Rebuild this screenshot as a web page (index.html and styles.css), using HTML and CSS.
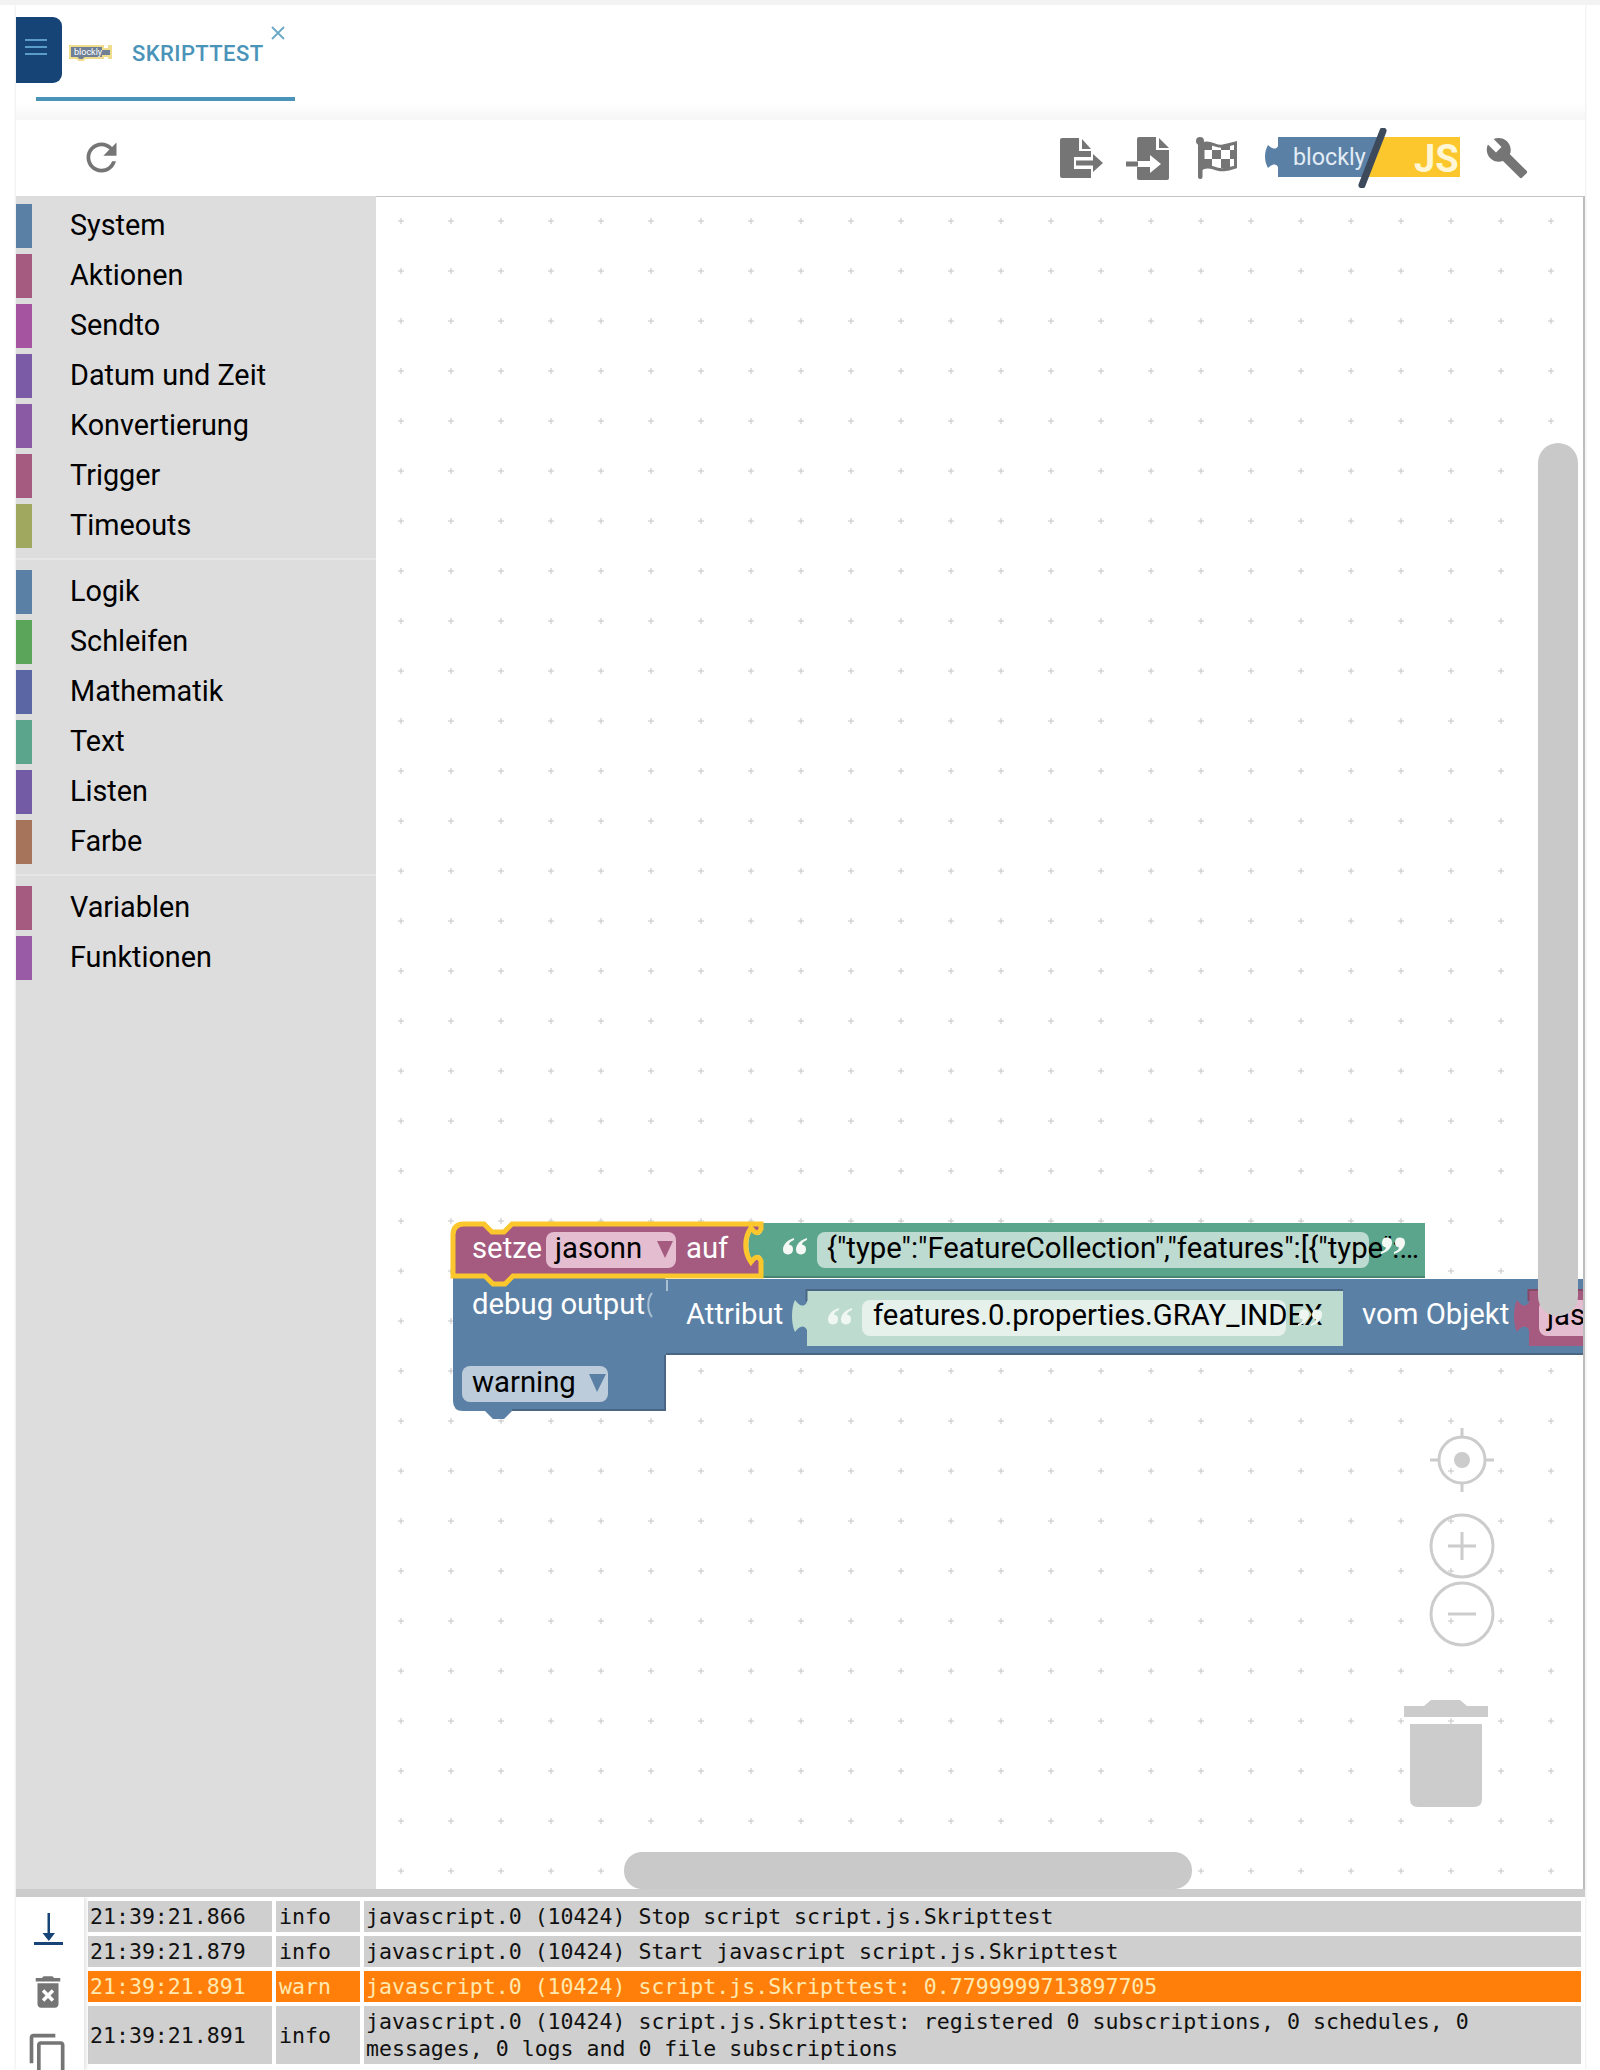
FILE: index.html
```html
<!DOCTYPE html>
<html lang="de">
<head>
<meta charset="utf-8">
<title>Skripttest</title>
<link rel="stylesheet" href="styles.css">
</head>
<body>
<div class="app">
  <header class="tabbar">
    <button class="menu-btn" aria-label="Menu"><span></span><span></span><span></span></button>
    <div class="tab">
      <svg class="tab-logo" viewBox="0 0 46 17" width="46" height="17">
        <path class="tl-out" d="M3 2H36V5H42V2H44V14H42V12H36V14H18L16 16H12L10 14H3Z"/>
        <text class="tl-text" x="7" y="11">blockly</text>
      </svg>
      <span class="tab-title">SKRIPTTEST</span>
      <svg class="tab-close" viewBox="0 0 14 14" width="14" height="14"><path d="M1 1L13 13M13 1L1 13"/></svg>
    </div>
  </header>

  <div class="toolbar">
    <svg class="ticon refresh" viewBox="0 0 24 24" width="45" height="45"><path d="M17.65 6.35C16.2 4.9 14.21 4 12 4c-4.42 0-7.99 3.58-7.99 8s3.57 8 7.99 8c3.73 0 6.84-2.55 7.73-6h-2.08c-.82 2.33-3.04 4-5.65 4-3.31 0-6-2.69-6-6s2.69-6 6-6c1.66 0 3.14.69 4.22 1.78L13 11h7V4l-2.35 2.35z"/></svg>
    <div class="tools">
      <svg class="ticon" viewBox="0 0 43 40" width="43" height="40">
        <path d="M0 2a2 2 0 0 1 2-2h17v13h12v6H14v12h17v9H2a2 2 0 0 1-2-2z"/>
        <path d="M22 1l9 10h-9z"/>
        <path d="M16 22.500h17V16l10 9-10 9v-6.500H16z"/>
      </svg>
      <svg class="ticon t-import" viewBox="0 0 43 43" width="43" height="43">
        <path d="M11 2a2 2 0 0 1 2-2h17v13h13v28a2 2 0 0 1-2 2H13a2 2 0 0 1-2-2V30h13v6l11-9-11-9v6H11z"/>
        <path d="M33 1l10 10H33z"/>
        <path d="M0 24.500h12v5H0z"/>
      </svg>
      <svg class="ticon t-flag" viewBox="0 0 41 42" width="41" height="42">
        <defs><pattern id="chk" patternUnits="userSpaceOnUse" width="18" height="18" x="7" y="4"><rect class="chk-a" width="9" height="9"/><rect class="chk-a" x="9" y="9" width="9" height="9"/></pattern></defs>
        <circle cx="4" cy="4" r="4"/>
        <rect x="2" y="4" width="4.500" height="38" rx="2"/>
        <path class="flag" d="M7 7C14 3 20 11 27 9C32 8 36 7 39.500 6V30C33 32 28 34 21 32C16 30 11 29 7 31Z"/>
      </svg>
      <svg class="logo t-logo" viewBox="0 0 196 60" width="196" height="60">
        <path class="logo-blue" d="M14 9H118L98 49H14V39C12 35 8 36 4 40C0 33 0 24 4 17C8 21 12 22 14 18Z"/>
        <path class="logo-yellow" d="M118 9H196V49H98Z"/>
        <text class="logo-b" x="29" y="37">blockly</text>
        <text class="logo-js" x="150" y="44">JS</text>
        <path class="logo-slash" d="M119 3L98 57"/>
      </svg>
      <svg class="ticon t-wrench" viewBox="0 0 24 24" width="44" height="44"><path d="M22.7 19l-9.100-9.100c.9-2.300.4-5-1.500-6.900-2-2-5-2.400-7.400-1.300L9 6 6 9 1.600 4.700C.4 7.100.9 10.100 2.900 12.100c1.900 1.900 4.600 2.400 6.900 1.500l9.100 9.100c.4.4 1 .4 1.400 0l2.300-2.300c.5-.4.5-1.100.1-1.400z"/></svg>
    </div>
  </div>

  <main class="main">
    <nav class="sidebar">
      <div class="cat"><i class="sw c-blue"></i>System</div>
      <div class="cat"><i class="sw c-rose"></i>Aktionen</div>
      <div class="cat"><i class="sw c-magenta"></i>Sendto</div>
      <div class="cat"><i class="sw c-violet"></i>Datum und Zeit</div>
      <div class="cat"><i class="sw c-purple"></i>Konvertierung</div>
      <div class="cat"><i class="sw c-rose"></i>Trigger</div>
      <div class="cat"><i class="sw c-olive"></i>Timeouts</div>
      <div class="sep"></div>
      <div class="cat"><i class="sw c-blue"></i>Logik</div>
      <div class="cat"><i class="sw c-green"></i>Schleifen</div>
      <div class="cat"><i class="sw c-indigo"></i>Mathematik</div>
      <div class="cat"><i class="sw c-teal"></i>Text</div>
      <div class="cat"><i class="sw c-listen"></i>Listen</div>
      <div class="cat"><i class="sw c-brown"></i>Farbe</div>
      <div class="sep"></div>
      <div class="cat"><i class="sw c-rose"></i>Variablen</div>
      <div class="cat"><i class="sw c-func"></i>Funktionen</div>
    </nav>

    <div class="workspace">
      <svg class="canvas" viewBox="376 197 1207 1692" width="1207" height="1692">
        <defs>
          <pattern id="grid" patternUnits="userSpaceOnUse" x="376" y="196" width="50" height="50"><path class="dot" d="M22 25H28M25 22V28"/></pattern>
          <path id="q" d="M11 0C4 2 0 7 0 11.500A5 5 0 1 0 6 6.500C6 5 8 3 11 2ZM24 0C17 2 13 7 13 11.500A5 5 0 1 0 19 6.500C19 5 21 3 24 2Z"/>
        </defs>
        <rect class="gridbg" x="376" y="196" width="1208" height="1694"/>

        <!-- debug block -->
        <path class="b-blue" d="M453 1276H665V1411H512L504 1419H493L485 1411H463Q453 1411 453 1401Z"/>
        <path class="b-shade" d="M512 1410H665V1355"/>
        <path class="sock-lt" d="M652 1293C647 1299 647 1311 652 1317"/>

        <!-- Attribut block -->
        <path class="b-blue" d="M665 1279H1590V1355H665Z"/>
        <path class="b-shade" d="M666 1354H1590"/>
        <path class="sock-lt" d="M667 1280V1291"/>

        <!-- string block -->
        <path class="b-mint" d="M807 1289H1343V1346H807V1330C804 1324 799 1326 795 1332C791 1324 791 1308 795 1300C799 1306 804 1308 807 1302Z"/>
        <path class="b-shade" d="M806.500 1301V1290H1343"/>
        <rect class="f-mint" x="862" y="1300" width="424" height="36" rx="8"/>
        <use class="q-lt" href="#q" x="828" y="1308"/>
        <text class="bt-dark" x="873" y="1325">features.0.properties.GRAY_INDEX</text>
        <use class="q-lt" href="#q" transform="translate(1322 1326) rotate(180)"/>
        <text class="bt" x="686" y="1324">Attribut</text>
        <text class="bt" x="1362" y="1324">vom Objekt</text>

        <!-- variable in Attribut -->
        <path class="b-rose" d="M1529 1289H1590V1346H1529V1330C1526 1324 1521 1326 1517 1332C1513 1324 1513 1308 1517 1300C1521 1306 1526 1308 1529 1302Z"/>
        <path class="b-roseshade" d="M1528.500 1301V1290H1590"/>
        <rect class="f-rose" x="1539" y="1300" width="60" height="36" rx="8"/>
        <text class="bt-dark" x="1547" y="1325">jasonn</text>

        <!-- green text block -->
        <path class="b-teal" d="M762 1223H1425V1278H762V1259C760 1253 757 1255 752 1260C747 1252 747 1238 752 1230C757 1235 760 1237 762 1231Z"/>
        <path class="b-tealshade" d="M762 1277H1425"/>
        <rect class="f-teal" x="817" y="1232" width="552" height="36" rx="8"/>
        <use class="q-wh" href="#q" x="783" y="1238"/>
        <text class="bt-dark" x="827" y="1258">{"type":"FeatureCollection","features":[{"type":…</text>
        <use class="q-wh" href="#q" transform="translate(1405 1254) rotate(180)"/>

        <!-- setze block -->
        <path class="b-rose b-sel" d="M453 1235Q453 1224 464 1224H484L492 1232H504L512 1224H761V1229C758 1235 755 1233 751 1228C744 1238 744 1252 751 1262C755 1257 758 1255 761 1261V1276H513L505 1284H493L485 1276H453Z"/>
        <text class="bt" x="472" y="1258">setze</text>
        <rect class="f-rose" x="546" y="1232" width="130" height="36" rx="8"/>
        <text class="bt-dark" x="555" y="1258">jasonn</text>
        <path class="tri-rose" d="M657 1241H673L665 1258Z"/>
        <text class="bt" x="686" y="1258">auf</text>

        <!-- debug labels -->
        <text class="bt" x="472" y="1314">debug output</text>
        <rect class="f-blue" x="462" y="1366" width="146" height="36" rx="8"/>
        <text class="bt-dark" x="472" y="1392">warning</text>
        <path class="tri-blue" d="M589 1374H606L597 1392Z"/>

        <!-- scrollbars -->
        <rect class="scroll" x="1538" y="443" width="40" height="873" rx="20"/>
        <rect class="scroll" x="624" y="1852" width="568" height="37" rx="18"/>

        <!-- controls -->
        <g class="ctl">
          <circle cx="1462" cy="1460" r="23"/>
          <path d="M1462 1428V1437M1462 1483V1492M1430 1460H1439M1485 1460H1494"/>
          <circle class="ctl-fill" cx="1462" cy="1460" r="8"/>
          <circle cx="1462" cy="1546" r="31"/>
          <path d="M1448 1546H1476M1462 1532V1560"/>
          <circle cx="1462" cy="1614" r="31"/>
          <path d="M1448 1614H1476"/>
        </g>
        <path class="ctl-fill" d="M1404 1706H1424L1431 1700H1460L1467 1706H1488V1717H1404ZM1410 1724H1482V1799Q1482 1807 1474 1807H1418Q1410 1807 1410 1799Z"/>
      </svg>
    </div>
  </main>

  <div class="splitter"></div>

  <section class="logs">
    <div class="log-tools">
      <svg class="lt-down" viewBox="0 0 29 32" width="29" height="32"><path d="M13.500 0h2.500v20h5l-6.200 8-6.300-8h5z"/><rect y="29" width="29" height="3"/></svg>
      <svg class="lt-gray" viewBox="0 0 24 24" width="42" height="42"><path d="M6 19c0 1.100.9 2 2 2h8c1.100 0 2-.9 2-2V7H6v12zm2.460-7.120l1.410-1.410L12 12.590l2.120-2.120 1.410 1.410L13.410 14l2.120 2.120-1.410 1.410L12 15.410l-2.120 2.120-1.410-1.410L10.590 14l-2.130-2.120zM15.500 4l-1-1h-5l-1 1H5v2h14V4z"/></svg>
      <svg class="lt-gray" viewBox="0 0 24 24" width="44" height="44"><path d="M16 1H4c-1.100 0-2 .9-2 2v14h2V3h12V1zm3 4H8c-1.100 0-2 .9-2 2v14c0 1.100.9 2 2 2h11c1.100 0 2-.9 2-2V7c0-1.100-.9-2-2-2zm0 16H8V7h11v14z"/></svg>
    </div>
    <table class="log-table">
      <colgroup><col class="col-time"><col class="col-level"><col></colgroup>
      <tr><td>21:39:21.866</td><td>info</td><td>javascript.0 (10424) Stop script script.js.Skripttest</td></tr>
      <tr><td>21:39:21.879</td><td>info</td><td>javascript.0 (10424) Start javascript script.js.Skripttest</td></tr>
      <tr class="warn"><td>21:39:21.891</td><td>warn</td><td>javascript.0 (10424) script.js.Skripttest: 0.7799999713897705</td></tr>
      <tr><td>21:39:21.891</td><td>info</td><td>javascript.0 (10424) script.js.Skripttest: registered 0 subscriptions, 0 schedules, 0 messages, 0 logs and 0 file subscriptions</td></tr>
    </table>
  </section>
</div>
</body>
</html>
```

FILE: styles.css
```css
* { box-sizing: border-box; }
html, body { margin: 0; height: 2070px; overflow: hidden; background: #fff; }
body { border-top: 5px solid #f3f3f3; padding: 0 15px 0 16px; font-family: Roboto, sans-serif; }
.app { height: 2065px; display: flex; flex-direction: column; box-shadow: 0 0 3px rgba(0,0,0,.12); }

/* tabs */
.tabbar { height: 115px; flex: none; display: flex; align-items: flex-start; background: linear-gradient(#fff 85%, #f6f6f6); }
.menu-btn { width: 46px; height: 66px; margin-top: 12px; padding: 0 0 6px 9px; border: 0; border-radius: 0 9px 9px 0; background: #164477; display: flex; flex-direction: column; justify-content: center; gap: 5px; position: relative; z-index: 1; }
.menu-btn span { display: block; width: 22px; height: 2px; background: #5b9ccb; }
.tab { width: 259px; height: 96px; margin-left: -26px; padding: 4px 0 0 31px; border-bottom: 4px solid #4a93b9; display: flex; align-items: center; gap: 19px; position: relative; }
.tab-logo { flex: none; margin-top: -2px; }
.tl-out { fill: #6f7f95; stroke: #efdc8c; stroke-width: 2; }
.tl-text { font: 9px Roboto, sans-serif; fill: #fff; }
.tab-title { font-size: 22px; font-weight: 500; color: #4a93b9; letter-spacing: .4px; }
.tab-close { position: absolute; left: 235px; top: 21px; }
.tab-close path { stroke: #6aa8c8; stroke-width: 1.800; fill: none; }

/* toolbar */
.toolbar { height: 76px; flex: none; display: flex; align-items: center; padding: 0 56px 0 63px; background: #fff; }
.ticon { fill: #757575; flex: none; display: block; }
.refresh { margin-top: -2px; }
.tools { margin-left: auto; display: flex; align-items: center; }
.t-import { margin-left: 23px; }
.t-flag { margin-left: 27px; }
.t-logo { margin-left: 27px; }
.t-wrench { margin-left: 25px; }
.chk-a { fill: #757575; }
.flag { fill: url(#chk); stroke: #757575; stroke-width: 3; }
.logo { flex: none; display: block; }
.logo-blue { fill: #5b80a5; }
.logo-yellow { fill: #fcc72c; }
.logo-b { font: 23.300px Roboto, sans-serif; fill: #e2ecf6; }
.logo-js { font: 700 38px Roboto, sans-serif; fill: #fff6d6; }
.logo-slash { stroke: #3c4a5c; stroke-width: 7; stroke-linecap: round; fill: none; }

/* main */
.main { height: 1693px; flex: none; display: flex; }
.sidebar { width: 360px; flex: none; padding-top: 8px; background: #ddd; display: flex; flex-direction: column; }
.cat { height: 44px; flex: none; margin-bottom: 6px; display: flex; align-items: flex-start; font-size: 28.800px; line-height: 43px; color: #000; }
.sw { width: 16px; height: 44px; margin-right: 38px; flex: none; }
.sep { height: 2px; flex: none; margin: 4px 0 10px; background: #e6e6e6; }
.c-blue { background: #5b80a5; }
.c-rose { background: #a55b80; }
.c-magenta { background: #a5559f; }
.c-violet { background: #7b5ba5; }
.c-purple { background: #8a5aa5; }
.c-olive { background: #a0a85f; }
.c-green { background: #5ba55b; }
.c-indigo { background: #5b67a5; }
.c-teal { background: #5ba58c; }
.c-listen { background: #745ba5; }
.c-brown { background: #a5745b; }
.c-func { background: #995ba5; }

.workspace { flex: 1; border-top: 1px solid #c4c4c4; border-right: 2px solid #bdbdbd; background: #fff; overflow: hidden; }
.canvas { display: block; }
.gridbg { fill: url(#grid); }
.dot { stroke: #c4c4c4; stroke-width: 1; fill: none; }
.bt, .bt-dark { font: 29.300px Roboto, sans-serif; }
.bt { fill: #fff; }
.bt-dark { fill: #000; }
.b-blue { fill: #5b80a5; }
.b-shade { stroke: #496684; stroke-width: 2; fill: none; }
.b-rose { fill: #a55b80; }
.b-roseshade { stroke: #844966; stroke-width: 2; fill: none; }
.b-sel { stroke: #fcc72c; stroke-width: 5; }
.b-teal { fill: #5ba58c; }
.b-tealshade { stroke: #498470; stroke-width: 2; fill: none; }
.b-mint { fill: #bddccf; }
.f-rose { fill: #e4bdd0; }
.f-teal { fill: #bddbd0; }
.f-mint { fill: #e6f1ec; }
.f-blue { fill: #bdccdb; }
.tri-rose { fill: #a55b80; }
.tri-blue { fill: #5b80a5; }
.q-wh { fill: #f4f9f6; }
.q-lt { fill: #f0f7f3; }
.sock-lt { stroke: #a8bed2; stroke-width: 2; fill: none; }
.scroll { fill: #c9c9c9; }
.ctl circle, .ctl path { fill: none; stroke: #ccc; stroke-width: 3; }
.ctl .ctl-fill, .ctl-fill { fill: #ccc; stroke: none; }

/* logs */
.splitter { height: 8px; flex: none; background: #ccc; }
.logs { flex: 1; min-height: 0; display: flex; overflow: hidden; background: #fff; }
.log-tools { width: 68px; flex: none; padding: 16px 4px 0 0; display: flex; flex-direction: column; align-items: center; box-shadow: 2px 0 4px rgba(0,0,0,.12); position: relative; }
.lt-down { fill: #164477; }
.lt-gray { fill: #757575; }
.log-tools svg { flex: none; }
.log-tools svg:nth-child(2) { margin-top: 26px; }
.log-tools svg:nth-child(3) { margin-top: 19px; }
.log-table { flex: 1; table-layout: fixed; border-collapse: separate; border-spacing: 4px; height: max-content; font: 21.550px/27px "DejaVu Sans Mono", monospace; color: #111; }
.log-table td { background: #cfcfcf; padding: 2px 3px; }
.log-table td:nth-child(odd) { padding-left: 2px; }
.col-time { width: 184px; }
.col-level { width: 84px; }
.warn td { background: #ff7f0a; color: #ffe9b0; }
```
